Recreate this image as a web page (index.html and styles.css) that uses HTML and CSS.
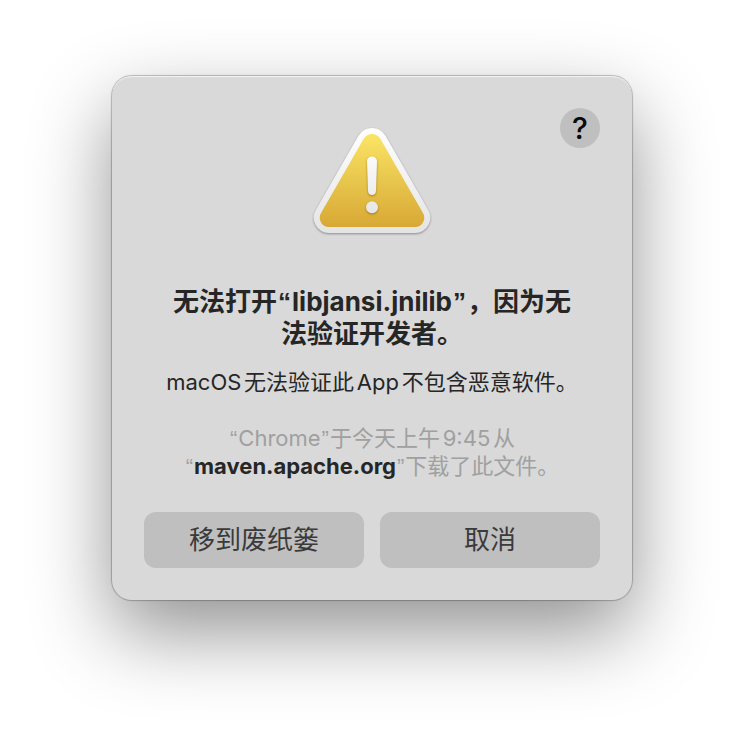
FILE: index.html
```html
<!DOCTYPE html>
<html lang="zh-CN">
<head>
<meta charset="utf-8">
<meta name="viewport" content="width=device-width, initial-scale=1">
<title>无法打开“libjansi.jnilib”</title>
<link rel="stylesheet" href="styles.css">
</head>
<body>
<main class="stage">
  <section class="alert" role="alertdialog" aria-labelledby="alert-title" aria-describedby="alert-message">
    <div class="alert-top">
      <svg class="alert-icon" viewBox="0 0 128 128" aria-hidden="true">
        <defs>
          <linearGradient id="rim" gradientUnits="userSpaceOnUse" x1="0" y1="11" x2="0" y2="117">
            <stop offset="0" stop-color="#ffffff"/>
            <stop offset="1" stop-color="#e4e4e4"/>
          </linearGradient>
          <linearGradient id="fill" x1="0" y1="0" x2="0" y2="1">
            <stop offset="0" stop-color="#fbe565"/>
            <stop offset="0.5" stop-color="#e8c64c"/>
            <stop offset="1" stop-color="#d8a835"/>
          </linearGradient>
          <linearGradient id="mark" gradientUnits="userSpaceOnUse" x1="0" y1="40" x2="0" y2="98">
            <stop offset="0" stop-color="#fbfbfb"/>
            <stop offset="1" stop-color="#e6e6e6"/>
          </linearGradient>
        </defs>
        <path class="icon-rim" stroke="url(#rim)" fill="url(#rim)" d="M55.5 23C59.5 16.3 68.5 16.3 72.5 23L115 97C118.5 103 114.5 111 107 111H21C13.5 111 9.5 103 13 97Z"/>
        <path fill="url(#fill)" d="M55.5 23C59.5 16.3 68.5 16.3 72.5 23L115 97C118.5 103 114.5 111 107 111H21C13.5 111 9.5 103 13 97Z"/>
        <g class="icon-mark" fill="url(#mark)">
          <path d="M59 45.5C59 38.8 69 38.8 69 45.5L68 75C68 80.4 60 80.4 60 75Z"/>
          <circle cx="64" cy="91.2" r="6"/>
        </g>
      </svg>
      <button class="help" type="button" aria-label="帮助">?</button>
    </div>
    <h1 class="title" id="alert-title">无法打开<span class="quote">“</span>libjansi.jnilib<span class="quote">”</span>，因为无<br>法验证开发者。</h1>
    <p class="message" id="alert-message">macOS无法验证此App不包含恶意软件。</p>
    <p class="message origin"><span class="quote">“</span>Chrome<span class="quote">”</span>于今天上午9:45从<br><span class="quote">“</span><strong class="source">maven.apache.org</strong><span class="quote">”</span>下载了此文件。</p>
    <div class="actions">
      <button class="action" type="button">移到废纸篓</button>
      <button class="action" type="button">取消</button>
    </div>
  </section>
</main>
</body>
</html>
```
FILE: styles.css
```css
* {
  box-sizing: border-box;
}

body {
  margin: 0;
  background: #fff;
  color: #262626;
  font-family: Inter, "Noto Sans CJK SC", sans-serif;
}

.stage {
  display: flex;
  justify-content: center;
  padding: 76px 24px 120px;
}

.alert {
  width: 100%;
  max-width: 520px;
  padding: 32px;
  border-radius: 20px;
  background: #d9d9d9;
  box-shadow:
    inset 0 2px 1px -1px rgba(255, 255, 255, 0.7),
    0 0 1px 1px rgba(0, 0, 0, 0.24),
    0 32px 80px rgba(0, 0, 0, 0.43);
  text-align: center;
}

.alert-top {
  display: grid;
  grid-template-columns: 40px 1fr 40px;
  align-items: start;
}

.alert-icon {
  grid-column: 2;
  justify-self: center;
  width: 128px;
  height: 128px;
  margin-top: 8px;
}

.icon-rim {
  stroke-width: 12px;
  stroke-linejoin: round;
  filter: drop-shadow(0 1px 1px rgba(0, 0, 0, 0.35));
}

.icon-mark {
  filter: drop-shadow(0 1px 1px rgba(110, 75, 0, 0.55));
}

.help {
  width: 40px;
  height: 40px;
  padding: 0;
  border: 0;
  border-radius: 50%;
  background: #bfbfbf;
  color: #0a0a0a;
  font: 500 30px/40px Inter, sans-serif;
}

.title {
  margin: 42px 0 18px;
  font-size: 26px;
  font-weight: 700;
  line-height: 32px;
}

.quote {
  padding: 0 1px;
  font-family: "Liberation Sans", sans-serif;
  line-height: 1;
}

.message {
  margin: 0;
  font-size: 22px;
  line-height: 28px;
  text-autospace: normal;
}

.origin {
  margin-top: 28px;
  color: #a0a0a0;
}

.source {
  color: #262626;
  font-weight: 700;
}

.actions {
  display: grid;
  grid-template-columns: 1fr 1fr;
  gap: 16px;
  margin-top: 32px;
}

.action {
  height: 56px;
  padding: 0 12px;
  border: 0;
  border-radius: 12px;
  background: #bfbfbf;
  color: #3a3a3a;
  font: 400 26px/32px Inter, "Noto Sans CJK SC", sans-serif;
}
```
